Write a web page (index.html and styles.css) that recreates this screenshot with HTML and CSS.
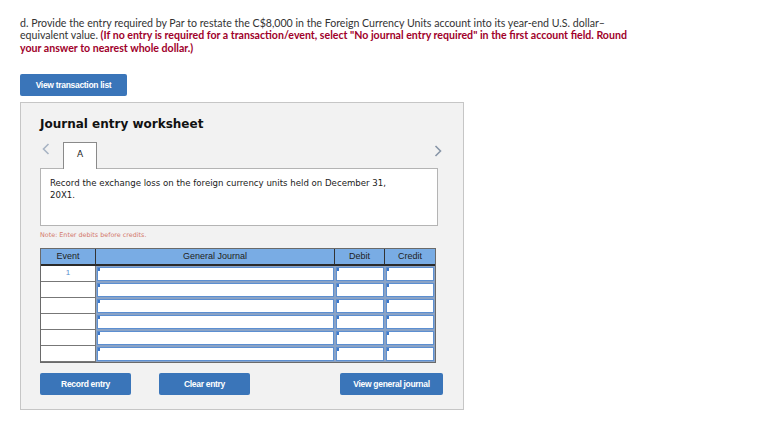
FILE: index.html
```html
<!DOCTYPE html>
<html>
<head>
<meta charset="utf-8">
<link rel="stylesheet" href="styles.css">
</head>
<body>
<div class="page">
  <p class="question">d. Provide the entry required by Par to restate the C$8,000 in the Foreign Currency Units account into its year-end U.S. dollar–equivalent value. <span class="hint">(If no entry is required for a transaction/event, select "No journal entry required" in the first account field. Round your answer to nearest whole dollar.)</span></p>
  <div class="top-actions"><button class="btn btn-list">View transaction list</button></div>
  <div class="panel">
    <h2 class="title">Journal entry worksheet</h2>
    <div class="tabs">
      <span class="arrow arrow-left">
        <svg width="8" height="12" viewBox="0 0 8 12"><path d="M6.5 1 L1.5 6 L6.5 11" fill="none" stroke="#a8b4c4" stroke-width="1.6"/></svg>
      </span>
      <span class="tab">A</span>
      <span class="spacer"></span>
      <span class="arrow arrow-right">
        <svg width="8" height="12" viewBox="0 0 8 12"><path d="M1.5 1 L6.5 6 L1.5 11" fill="none" stroke="#8896a8" stroke-width="1.6"/></svg>
      </span>
    </div>
    <div class="desc">Record the exchange loss on the foreign currency units held on December 31, 20X1.</div>
    <div class="note">Note: Enter debits before credits.</div>
    <div class="journal">
      <div class="hcell">Event</div>
      <div class="hcell">General Journal</div>
      <div class="hcell">Debit</div>
      <div class="hcell">Credit</div>

      <div class="ecell">1</div><div class="icell"><span class="inp"></span></div><div class="icell"><span class="inp"></span></div><div class="icell"><span class="inp"></span></div>
      <div class="ecell"></div><div class="icell"><span class="inp"></span></div><div class="icell"><span class="inp"></span></div><div class="icell"><span class="inp"></span></div>
      <div class="ecell"></div><div class="icell"><span class="inp"></span></div><div class="icell"><span class="inp"></span></div><div class="icell"><span class="inp"></span></div>
      <div class="ecell"></div><div class="icell"><span class="inp"></span></div><div class="icell"><span class="inp"></span></div><div class="icell"><span class="inp"></span></div>
      <div class="ecell"></div><div class="icell"><span class="inp"></span></div><div class="icell"><span class="inp"></span></div><div class="icell"><span class="inp"></span></div>
      <div class="ecell"></div><div class="icell"><span class="inp"></span></div><div class="icell"><span class="inp"></span></div><div class="icell"><span class="inp"></span></div>
    </div>
    <div class="actions">
      <button class="btn btn-record">Record entry</button>
      <button class="btn btn-clear">Clear entry</button>
      <span class="spacer"></span>
      <button class="btn btn-view">View general journal</button>
    </div>
  </div>
</div>
</body>
</html>
```

FILE: styles.css
```css
html, body {
  margin: 0;
  padding: 0;
  background: #ffffff;
}

.page {
  padding: 17px 0 0 20px;
  width: 625px;
}

.question {
  margin: 0;
  font-family: "Lato", "Open Sans", sans-serif;
  font-size: 10.6px;
  line-height: 12.3px;
  color: #333333;
  width: 625px;
}

.hint {
  color: #a0002a;
  font-weight: bold;
}

.top-actions {
  margin-top: 20px;
  height: 22px;
}

.btn {
  background: #3a75b9;
  color: #ffffff;
  border: 0;
  border-radius: 2px;
  font-family: "Liberation Sans", Arial, sans-serif;
  font-weight: bold;
  font-size: 8.5px;
  letter-spacing: -0.3px;
  height: 22px;
  padding: 0;
  margin: 0;
  display: inline-flex;
  align-items: center;
  justify-content: center;
}

.btn-list { width: 107px; }

.panel {
  margin-top: 6px;
  width: 444px;
  height: 308px;
  background: #f2f2f2;
  border: 1px solid #c6c6c6;
  box-sizing: border-box;
  padding: 0 19px 0 19px;
}

.title {
  margin: 14px 0 0 0;
  font-family: "DejaVu Sans", Verdana, sans-serif;
  font-weight: bold;
  font-size: 12px;
  line-height: 15px;
  color: #111111;
}

.tabs {
  display: flex;
  align-items: flex-end;
  margin-top: 8px;
  height: 28px;
}

.arrow {
  display: flex;
  align-items: center;
  height: 26px;
}

.arrow-left { margin-left: 2px; width: 21px; padding-bottom: 6px; }
.arrow-right { margin-right: 2px; padding-bottom: 4px; }

.tab {
  width: 34px;
  height: 27px;
  box-sizing: border-box;
  border: 1px solid #8a8a8a;
  border-bottom: 0;
  background: #ffffff;
  font-family: "DejaVu Sans", Verdana, sans-serif;
  font-size: 9px;
  color: #222222;
  display: flex;
  justify-content: center;
  padding-top: 6px;
  position: relative;
  z-index: 1;
  margin-bottom: -1px;
}

.spacer { flex: 1; }

.desc {
  width: 398px;
  height: 58px;
  box-sizing: border-box;
  background: #ffffff;
  border: 1px solid #b4b4b4;
  padding: 8px 40px 0 9px;
  font-family: "DejaVu Sans", Verdana, sans-serif;
  font-size: 8.6px;
  line-height: 12px;
  color: #1a1a1a;
}

.note {
  margin-top: 5px;
  font-family: "DejaVu Sans", Verdana, sans-serif;
  font-size: 6.4px;
  color: #d2776a;
  height: 10px;
}

.journal {
  margin-top: 7px;
  display: grid;
  grid-template-columns: 55px 239px 50px 50px;
  grid-template-rows: 17px repeat(6, 16px);
  width: 394px;
  border: 1px solid #6a6a6a;
  box-sizing: content-box;
  background: #ffffff;
}

.hcell {
  background: #79ace4;
  border-right: 1px solid #333333;
  border-bottom: 2px solid #2a2a2a;
  box-sizing: border-box;
  font-family: "Liberation Sans", Arial, sans-serif;
  font-size: 9px;
  color: #222222;
  display: flex;
  align-items: center;
  justify-content: center;
}

.hcell:nth-child(4) { border-right: 0; }

.ecell {
  border-right: 1px solid #777777;
  border-bottom: 1px solid #777777;
  box-sizing: border-box;
  font-family: "Liberation Sans", Arial, sans-serif;
  font-size: 8px;
  color: #5a8fcf;
  display: flex;
  justify-content: center;
  padding-top: 2px;
}

.icell {
  background: #8aa3c6;
  padding: 1px;
  box-sizing: border-box;
  display: flex;
}

.inp {
  flex: 1;
  background: #ffffff;
  border: 1px solid #5c8fd1;
  position: relative;
}

.inp::before {
  content: "";
  position: absolute;
  left: 0;
  top: 0;
  width: 2px;
  height: 3px;
  background: #3d78c9;
}

.actions {
  display: flex;
  margin-top: 10px;
}

.btn-record { width: 91px; }
.btn-clear { width: 91px; margin-left: 28px; }
.btn-view { width: 103px; margin-right: 1px; }
```
